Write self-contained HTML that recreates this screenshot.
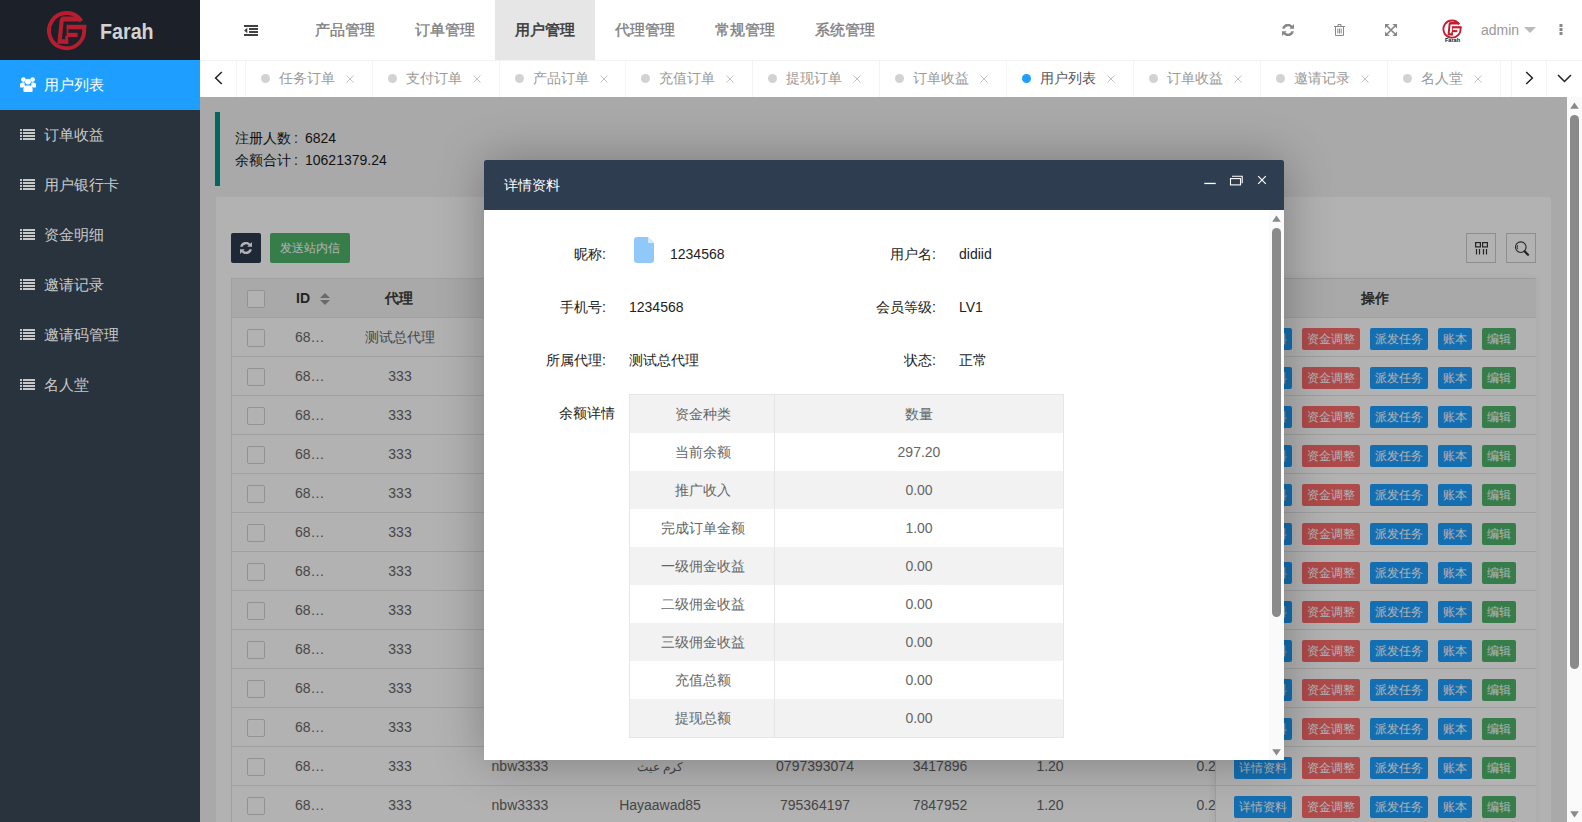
<!DOCTYPE html>
<html><head><meta charset="utf-8"><style>
*{box-sizing:border-box;margin:0;padding:0}
html,body{width:1582px;height:822px;overflow:hidden;background:#f2f2f2;font-family:"Liberation Sans",sans-serif;font-size:14px;color:#333}
svg{display:block}
#side{position:absolute;left:0;top:0;width:200px;height:822px;background:#28333e}
#logo{position:absolute;left:0;top:0;width:200px;height:60px;background:#1c2129}
#logo .t{position:absolute;left:100px;top:18.5px;font-size:20px;line-height:24px;font-weight:bold;color:#d2d2d2;transform:scale(0.985,1.07);transform-origin:0 0}
#logo svg{position:absolute;left:44px;top:8px}
.mi{position:absolute;left:0;width:200px;height:50px;color:#c8c8c8;font-size:15px;line-height:50px}
.mi.on{background:#1e9fff;color:#fff}
.mi span{position:absolute;left:44px;top:0}
.mi svg{position:absolute;left:20px}
#hdr{position:absolute;left:200px;top:0;width:1382px;height:60px;background:#fff}
#hdr .ic{position:absolute}
.tm{position:absolute;top:0;width:100px;height:60px;line-height:60px;text-align:center;font-size:15px;color:#808080;-webkit-text-stroke:0.35px #808080}
.tm.on{background:#e6e6e6;color:#3c3c3c;-webkit-text-stroke:0.55px #3c3c3c}
#admin{position:absolute;left:1281px;top:21px;font-size:14px;line-height:18px;color:#999}
#tabs{position:absolute;left:200px;top:60px;width:1382px;height:37px;background:#fff;border-top:1px solid #f4f4f4}
.tb{position:absolute;top:0;height:36px;line-height:36px;font-size:14px;color:#999;border-left:1px solid #f4f4f4}
.tb i{position:absolute;left:15px;top:13px;width:9px;height:9px;border-radius:50%;background:#d2d2d2}
.tb.on i{background:#1e9fff}
.tb.on{color:#555}
.tb b{position:absolute;left:33px;top:-1px;font-weight:normal}
.tb svg{position:absolute;top:14px}
.tbr{position:absolute;top:0;height:36px;border-left:1px solid #f4f4f4}
#cont{position:absolute;left:200px;top:97px;width:1367px;height:725px;background:#f2f2f2;overflow:hidden}
#shade{position:absolute;left:200px;top:97px;width:1367px;height:725px;background:rgba(0,0,0,.3)}
#vscroll{position:absolute;left:1567px;top:97px;width:15px;height:725px;background:#fafafa}
#quote{position:absolute;left:15px;top:15px;width:1337px;height:74px;padding:15px 0 15px 15px;line-height:22px;border-left:5px solid #009688;color:#1a1a1a;background:#f2f2f2}
.fc{display:inline-block;width:14px;padding-left:3px}
#card{position:absolute;left:16px;top:100px;width:1335px;height:800px;background:#fff;border-radius:2px}
.tbtn{position:absolute;height:30px;border-radius:2px}
.tico{position:absolute;width:30px;height:30px;border:1px solid #ccc}
#tbl{position:absolute;left:31px;top:181px;width:1305px;height:600px;border-left:1px solid #e6e6e6;border-right:1px solid #e6e6e6;border-top:1px solid #e6e6e6}
.thead{position:absolute;left:0;top:0;right:0;height:39px;background:#f2f2f2;border-bottom:1px solid #e6e6e6}
.th{position:absolute;height:38px;line-height:38px;font-weight:bold;color:#333;font-size:14px}
.tr{position:absolute;left:0;right:0;height:39px;border-bottom:1px solid #e6e6e6}
.th.cj{font-weight:normal;-webkit-text-stroke:0.5px #333}
.td{position:absolute;height:38px;line-height:38px;color:#666;font-size:14px;white-space:nowrap}
.td.c{text-align:center}
.cb{position:absolute;width:18px;height:18px;border:1px solid #d2d2d2;border-radius:2px;background:#fff}
#fixr{position:absolute;left:983px;top:0;width:321px;height:600px;background:#fff;border-left:1px solid #e6e6e6;box-shadow:-1px 0 8px rgba(0,0,0,.08)}
#modal{position:absolute;left:484px;top:160px;width:800px;height:600px;background:#fff;border-radius:2px 2px 0 0;box-shadow:1px 1px 50px rgba(0,0,0,.3)}
#mtitle{position:absolute;left:0;top:0;width:800px;height:50px;line-height:50px;padding-left:20px;background:#2e3d50;color:#fff;font-size:14px;border-radius:2px 2px 0 0}
#mbody{position:absolute;left:0;top:50px;width:800px;height:550px;overflow:hidden}
.ml{position:absolute;height:20px;line-height:20px;text-align:right;color:#222;font-size:14px}
.mv{position:absolute;height:20px;line-height:20px;color:#222;font-size:14px;white-space:nowrap}
#mtbl{position:absolute;left:145px;top:184px;width:435px;height:344px;border:1px solid #e6e6e6}
.mr{position:absolute;left:0;width:433px;height:38px}
.mc{position:absolute;top:0;height:38px;line-height:38px;text-align:center;color:#666;font-size:14px}
#mscroll{position:absolute;left:785px;top:0;width:15px;height:550px;background:#fafafa}
.bx{position:absolute;height:22px;line-height:22px;font-size:12px;color:#fff;text-align:center;border-radius:2px;white-space:nowrap}
</style></head>
<body>
<div id="side"><div id="logo"><svg width="46" height="46" viewBox="0 0 46 46"><g fill="#b81d2f"><path d="M37.36 13.1 A17.6 17.6 0 1 0 39.8 19" fill="none" stroke="#b81d2f" stroke-width="3.9"/><path d="M13.3 35.8 L15.7 12 L19.8 12 L17.9 31.3 L24.2 31.3 L24.2 35.8 Z"/><path d="M15.8 12.5 Q16.2 8.4 19.5 8.4 L31 8.4 Q35.5 8.6 38.6 11 L36.6 13.4 L20 13.4 Z"/><rect x="22.7" y="16.8" width="19.6" height="4.5"/><rect x="22.7" y="16.8" width="1.6" height="12.2"/><rect x="22.7" y="24.8" width="10.9" height="4.3"/><rect x="21.2" y="28" width="3" height="7.8"/></g></svg><div class="t">Farah</div></div>
<div class="mi on" style="top:60px"><svg style="top:17px" width="16" height="15" viewBox="0 0 16 15"><g fill="#fff"><circle cx="3.4" cy="2.6" r="2.3"/><circle cx="12.6" cy="2.6" r="2.3"/><circle cx="8" cy="4.6" r="2.9"/><path d="M0 9.6 L0 8 Q0 5.4 2.6 5.4 L4.6 5.4 Q4.2 7.6 5.4 9 Q3.8 9.4 3.2 10.6 L0.6 10.6 Q0 10.6 0 9.6 Z"/><path d="M16 9.6 L16 8 Q16 5.4 13.4 5.4 L11.4 5.4 Q11.8 7.6 10.6 9 Q12.2 9.4 12.8 10.6 L15.4 10.6 Q16 10.6 16 9.6 Z"/><path d="M3.4 14 L3.4 11.8 Q3.4 8.4 6.6 8.4 L9.4 8.4 Q12.6 8.4 12.6 11.8 L12.6 14 Q12.6 15 11.6 15 L4.4 15 Q3.4 15 3.4 14 Z"/></g></svg><span>用户列表</span></div>
<div class="mi" style="top:110px"><svg style="top:19px" width="15" height="11" viewBox="0 0 15 11"><g fill="#c8c8c8"><rect x="0" y="0" width="2" height="2"/><rect x="3" y="0" width="12" height="2"/><rect x="0" y="3" width="2" height="2"/><rect x="3" y="3" width="12" height="2"/><rect x="0" y="6" width="2" height="2"/><rect x="3" y="6" width="12" height="2"/><rect x="0" y="9" width="2" height="2"/><rect x="3" y="9" width="12" height="2"/></g></svg><span>订单收益</span></div>
<div class="mi" style="top:160px"><svg style="top:19px" width="15" height="11" viewBox="0 0 15 11"><g fill="#c8c8c8"><rect x="0" y="0" width="2" height="2"/><rect x="3" y="0" width="12" height="2"/><rect x="0" y="3" width="2" height="2"/><rect x="3" y="3" width="12" height="2"/><rect x="0" y="6" width="2" height="2"/><rect x="3" y="6" width="12" height="2"/><rect x="0" y="9" width="2" height="2"/><rect x="3" y="9" width="12" height="2"/></g></svg><span>用户银行卡</span></div>
<div class="mi" style="top:210px"><svg style="top:19px" width="15" height="11" viewBox="0 0 15 11"><g fill="#c8c8c8"><rect x="0" y="0" width="2" height="2"/><rect x="3" y="0" width="12" height="2"/><rect x="0" y="3" width="2" height="2"/><rect x="3" y="3" width="12" height="2"/><rect x="0" y="6" width="2" height="2"/><rect x="3" y="6" width="12" height="2"/><rect x="0" y="9" width="2" height="2"/><rect x="3" y="9" width="12" height="2"/></g></svg><span>资金明细</span></div>
<div class="mi" style="top:260px"><svg style="top:19px" width="15" height="11" viewBox="0 0 15 11"><g fill="#c8c8c8"><rect x="0" y="0" width="2" height="2"/><rect x="3" y="0" width="12" height="2"/><rect x="0" y="3" width="2" height="2"/><rect x="3" y="3" width="12" height="2"/><rect x="0" y="6" width="2" height="2"/><rect x="3" y="6" width="12" height="2"/><rect x="0" y="9" width="2" height="2"/><rect x="3" y="9" width="12" height="2"/></g></svg><span>邀请记录</span></div>
<div class="mi" style="top:310px"><svg style="top:19px" width="15" height="11" viewBox="0 0 15 11"><g fill="#c8c8c8"><rect x="0" y="0" width="2" height="2"/><rect x="3" y="0" width="12" height="2"/><rect x="0" y="3" width="2" height="2"/><rect x="3" y="3" width="12" height="2"/><rect x="0" y="6" width="2" height="2"/><rect x="3" y="6" width="12" height="2"/><rect x="0" y="9" width="2" height="2"/><rect x="3" y="9" width="12" height="2"/></g></svg><span>邀请码管理</span></div>
<div class="mi" style="top:360px"><svg style="top:19px" width="15" height="11" viewBox="0 0 15 11"><g fill="#c8c8c8"><rect x="0" y="0" width="2" height="2"/><rect x="3" y="0" width="12" height="2"/><rect x="0" y="3" width="2" height="2"/><rect x="3" y="3" width="12" height="2"/><rect x="0" y="6" width="2" height="2"/><rect x="3" y="6" width="12" height="2"/><rect x="0" y="9" width="2" height="2"/><rect x="3" y="9" width="12" height="2"/></g></svg><span>名人堂</span></div>
</div>
<div id="hdr">
<svg class="ic" style="left:44px;top:25px" width="14" height="11" viewBox="0 0 14 11"><g fill="#404040"><rect x="0" y="0" width="14" height="2"/><rect x="5" y="3" width="9" height="2"/><rect x="5" y="6" width="9" height="2"/><rect x="0" y="9" width="14" height="2"/><path d="M0 5.5 L3.3 2.8 L3.3 8.2 Z"/></g></svg>
<div class="tm" style="left:95px">产品管理</div>
<div class="tm" style="left:195px">订单管理</div>
<div class="tm on" style="left:295px">用户管理</div>
<div class="tm" style="left:395px">代理管理</div>
<div class="tm" style="left:495px">常规管理</div>
<div class="tm" style="left:595px">系统管理</div>
<svg class="ic" style="left:1082px;top:24px" width="12" height="12" viewBox="0 0 12 12"><g fill="#888"><path d="M0.2 4.8 A5.8 5.8 0 0 1 10.2 1.7 L12 0 L12 4.8 L7.3 4.8 L8.6 3.5 A3.6 3.6 0 0 0 2.6 4.8 Z"/><path d="M11.8 7.2 A5.8 5.8 0 0 1 1.8 10.3 L0 12 L0 7.2 L4.7 7.2 L3.4 8.5 A3.6 3.6 0 0 0 9.4 7.2 Z"/></g></svg>
<svg class="ic" style="left:1134px;top:24px" width="11" height="12" viewBox="0 0 11 12"><g fill="none" stroke="#888" stroke-width="1">
<path d="M0 2.5 L11 2.5"/><path d="M4 2.5 L4 0.5 L7 0.5 L7 2.5"/><path d="M1.5 2.5 L1.5 11.5 L9.5 11.5 L9.5 2.5"/>
<path d="M3.8 4.5 L3.8 9.5 M5.5 4.5 L5.5 9.5 M7.2 4.5 L7.2 9.5"/></g></svg>
<svg class="ic" style="left:1185px;top:24px" width="12" height="12" viewBox="0 0 12 12"><path d="M2 2 L10 10 M10 2 L2 10" stroke="#888" stroke-width="1.7" fill="none"/><g fill="#888"><path d="M0 0 L4.6 0 L0 4.6 Z"/><path d="M12 0 L7.4 0 L12 4.6 Z"/><path d="M0 12 L4.6 12 L0 7.4 Z"/><path d="M12 12 L7.4 12 L12 7.4 Z"/></g></svg>
<svg class="ic" style="left:1241px;top:18px" width="24" height="27" viewBox="0 0 24 27"><g transform="scale(0.487)" fill="#c01f31"><path d="M37.36 13.1 A17.6 17.6 0 1 0 39.8 19" fill="none" stroke="#c01f31" stroke-width="3.9"/><path d="M13.3 35.8 L15.7 12 L19.8 12 L17.9 31.3 L24.2 31.3 L24.2 35.8 Z"/><path d="M15.8 12.5 Q16.2 8.4 19.5 8.4 L31 8.4 Q35.5 8.6 38.6 11 L36.6 13.4 L20 13.4 Z"/><rect x="22.7" y="16.8" width="19.6" height="4.5"/><rect x="22.7" y="16.8" width="1.6" height="12.2"/><rect x="22.7" y="24.8" width="10.9" height="4.3"/><rect x="21.2" y="28" width="3" height="7.8"/></g><text x="11.5" y="24.3" font-family="Liberation Sans" font-size="5.6" font-weight="bold" text-anchor="middle" fill="#111">Farah</text></svg>
<div id="admin">admin</div>
<svg class="ic" style="left:1324px;top:27px" width="12" height="6" viewBox="0 0 12 6"><path d="M0 0 L12 0 L6 6 Z" fill="#bbb"/></svg>
<svg class="ic" style="left:1359px;top:24px" width="4" height="11" viewBox="0 0 4 11"><g fill="#888"><rect x="0.5" y="0" width="3" height="3"/><rect x="0.5" y="4" width="3" height="3"/><rect x="0.5" y="8" width="3" height="3"/></g></svg>
</div>
<div id="tabs">
<svg style="position:absolute;left:14px;top:10px" width="9" height="14" viewBox="0 0 9 14"><path d="M7.8 1 L1.6 7 L7.8 13" fill="none" stroke="#222" stroke-width="1.5"/></svg>
<div class="tbr" style="left:36px;width:9px"></div>
<div class="tb" style="left:45px;width:127px"><i></i><b>任务订单</b><svg style="left:100px" width="8" height="8" viewBox="0 0 8 8"><path d="M0.5 0.5L7.5 7.5M7.5 0.5L0.5 7.5" fill="none" stroke="#c2c2c2" stroke-width="1"/></svg></div>
<div class="tb" style="left:172px;width:127px"><i></i><b>支付订单</b><svg style="left:100px" width="8" height="8" viewBox="0 0 8 8"><path d="M0.5 0.5L7.5 7.5M7.5 0.5L0.5 7.5" fill="none" stroke="#c2c2c2" stroke-width="1"/></svg></div>
<div class="tb" style="left:299px;width:126px"><i></i><b>产品订单</b><svg style="left:100px" width="8" height="8" viewBox="0 0 8 8"><path d="M0.5 0.5L7.5 7.5M7.5 0.5L0.5 7.5" fill="none" stroke="#c2c2c2" stroke-width="1"/></svg></div>
<div class="tb" style="left:425px;width:127px"><i></i><b>充值订单</b><svg style="left:100px" width="8" height="8" viewBox="0 0 8 8"><path d="M0.5 0.5L7.5 7.5M7.5 0.5L0.5 7.5" fill="none" stroke="#c2c2c2" stroke-width="1"/></svg></div>
<div class="tb" style="left:552px;width:127px"><i></i><b>提现订单</b><svg style="left:100px" width="8" height="8" viewBox="0 0 8 8"><path d="M0.5 0.5L7.5 7.5M7.5 0.5L0.5 7.5" fill="none" stroke="#c2c2c2" stroke-width="1"/></svg></div>
<div class="tb" style="left:679px;width:127px"><i></i><b>订单收益</b><svg style="left:100px" width="8" height="8" viewBox="0 0 8 8"><path d="M0.5 0.5L7.5 7.5M7.5 0.5L0.5 7.5" fill="none" stroke="#c2c2c2" stroke-width="1"/></svg></div>
<div class="tb on" style="left:806px;width:127px"><i></i><b>用户列表</b><svg style="left:100px" width="8" height="8" viewBox="0 0 8 8"><path d="M0.5 0.5L7.5 7.5M7.5 0.5L0.5 7.5" fill="none" stroke="#c2c2c2" stroke-width="1"/></svg></div>
<div class="tb" style="left:933px;width:127px"><i></i><b>订单收益</b><svg style="left:100px" width="8" height="8" viewBox="0 0 8 8"><path d="M0.5 0.5L7.5 7.5M7.5 0.5L0.5 7.5" fill="none" stroke="#c2c2c2" stroke-width="1"/></svg></div>
<div class="tb" style="left:1060px;width:127px"><i></i><b>邀请记录</b><svg style="left:100px" width="8" height="8" viewBox="0 0 8 8"><path d="M0.5 0.5L7.5 7.5M7.5 0.5L0.5 7.5" fill="none" stroke="#c2c2c2" stroke-width="1"/></svg></div>
<div class="tb" style="left:1187px;width:113px"><i></i><b>名人堂</b><svg style="left:86px" width="8" height="8" viewBox="0 0 8 8"><path d="M0.5 0.5L7.5 7.5M7.5 0.5L0.5 7.5" fill="none" stroke="#c2c2c2" stroke-width="1"/></svg></div>
<div class="tbr" style="left:1300px;width:11px"></div>
<div class="tbr" style="left:1311px;width:35px"><svg style="position:absolute;left:13px;top:10px" width="9" height="14" viewBox="0 0 9 14"><path d="M1.2 1 L7.4 7 L1.2 13" fill="none" stroke="#222" stroke-width="1.5"/></svg></div>
<div class="tbr" style="left:1346px;width:36px"><svg style="position:absolute;left:10px;top:13px" width="16" height="9" viewBox="0 0 16 9"><path d="M1 1 L7.5 7.5 L14 1" fill="none" stroke="#222" stroke-width="1.5"/></svg></div>
</div>
<div id="cont">
<div id="quote"><div>注册人数<span class="fc">:</span>6824</div><div>余额合计<span class="fc">:</span>10621379.24</div></div>
<div id="card"></div>
<div class="tbtn" style="left:31px;top:136px;width:30px;background:#2b3a50"><svg style="position:absolute;left:9px;top:9px" width="12" height="12" viewBox="0 0 12 12"><g fill="#fff"><path d="M0.2 4.8 A5.8 5.8 0 0 1 10.2 1.7 L12 0 L12 4.8 L7.3 4.8 L8.6 3.5 A3.6 3.6 0 0 0 2.6 4.8 Z"/><path d="M11.8 7.2 A5.8 5.8 0 0 1 1.8 10.3 L0 12 L0 7.2 L4.7 7.2 L3.4 8.5 A3.6 3.6 0 0 0 9.4 7.2 Z"/></g></svg></div>
<div class="tbtn" style="left:70px;top:136px;width:80px;background:#50b46a;color:#fff;font-size:12px;line-height:30px;text-align:center">发送站内信</div>
<div class="tico" style="left:1266px;top:136px"><svg style="position:absolute;left:8px;top:8px" width="13" height="13" viewBox="0 0 13 13"><g fill="none" stroke="#333" stroke-width="1.2"><rect x="0.6" y="0.6" width="4.8" height="4.3"/><rect x="7.6" y="0.6" width="4.8" height="4.3"/><path d="M1.5 7 L1.5 12.5 M4.5 7 L4.5 12.5 M8.5 7 L8.5 12.5 M11.5 7 L11.5 12.5"/></g></svg></div>
<div class="tico" style="left:1306px;top:136px"><svg style="position:absolute;left:7px;top:7px" width="16" height="16" viewBox="0 0 16 16"><g fill="none" stroke="#333"><circle cx="6.8" cy="6.2" r="5.3" stroke-width="1.1"/><path d="M10.6 10.2 L14 13.8" stroke-width="2.2" stroke-linecap="round"/><path d="M3.8 4.2 A3.6 3.6 0 0 0 3.8 8.2" stroke-width="0.9"/></g></svg></div>
<div id="tbl">
<div class="thead"></div>
<div class="th" style="left:64px;top:0">ID<svg style="position:absolute;left:24px;top:14px" width="10" height="12" viewBox="0 0 10 12"><g fill="#999"><path d="M0 5 L5 0 L10 5 Z"/><path d="M0 7 L5 12 L10 7 Z"/></g></svg></div>
<div class="th cj" style="left:117px;top:-0.5px;width:100px;text-align:center">代理</div>
<div class="cb" style="left:15px;top:11px"></div>
<div class="tr" style="top:39px"></div>
<div class="cb" style="left:15px;top:50px"></div>
<div class="td" style="left:63px;top:39px">68…</div>
<div class="td c" style="left:118px;top:39px;width:100px">测试总代理</div>
<div class="tr" style="top:78px"></div>
<div class="cb" style="left:15px;top:89px"></div>
<div class="td" style="left:63px;top:78px">68…</div>
<div class="td c" style="left:118px;top:78px;width:100px">333</div>
<div class="tr" style="top:117px"></div>
<div class="cb" style="left:15px;top:128px"></div>
<div class="td" style="left:63px;top:117px">68…</div>
<div class="td c" style="left:118px;top:117px;width:100px">333</div>
<div class="tr" style="top:156px"></div>
<div class="cb" style="left:15px;top:167px"></div>
<div class="td" style="left:63px;top:156px">68…</div>
<div class="td c" style="left:118px;top:156px;width:100px">333</div>
<div class="tr" style="top:195px"></div>
<div class="cb" style="left:15px;top:206px"></div>
<div class="td" style="left:63px;top:195px">68…</div>
<div class="td c" style="left:118px;top:195px;width:100px">333</div>
<div class="tr" style="top:234px"></div>
<div class="cb" style="left:15px;top:245px"></div>
<div class="td" style="left:63px;top:234px">68…</div>
<div class="td c" style="left:118px;top:234px;width:100px">333</div>
<div class="tr" style="top:273px"></div>
<div class="cb" style="left:15px;top:284px"></div>
<div class="td" style="left:63px;top:273px">68…</div>
<div class="td c" style="left:118px;top:273px;width:100px">333</div>
<div class="tr" style="top:312px"></div>
<div class="cb" style="left:15px;top:323px"></div>
<div class="td" style="left:63px;top:312px">68…</div>
<div class="td c" style="left:118px;top:312px;width:100px">333</div>
<div class="tr" style="top:351px"></div>
<div class="cb" style="left:15px;top:362px"></div>
<div class="td" style="left:63px;top:351px">68…</div>
<div class="td c" style="left:118px;top:351px;width:100px">333</div>
<div class="tr" style="top:390px"></div>
<div class="cb" style="left:15px;top:401px"></div>
<div class="td" style="left:63px;top:390px">68…</div>
<div class="td c" style="left:118px;top:390px;width:100px">333</div>
<div class="tr" style="top:429px"></div>
<div class="cb" style="left:15px;top:440px"></div>
<div class="td" style="left:63px;top:429px">68…</div>
<div class="td c" style="left:118px;top:429px;width:100px">333</div>
<div class="tr" style="top:468px"></div>
<div class="cb" style="left:15px;top:479px"></div>
<div class="td" style="left:63px;top:468px">68…</div>
<div class="td c" style="left:118px;top:468px;width:100px">333</div>
<div class="td c" style="left:208px;top:468px;width:160px">nbw3333</div>
<div class="td c" style="left:348px;top:468px;width:160px"><span style="font-size:12px">كرم عيث</span></div>
<div class="td c" style="left:503px;top:468px;width:160px">0797393074</div>
<div class="td c" style="left:628px;top:468px;width:160px">3417896</div>
<div class="td c" style="left:738px;top:468px;width:160px">1.20</div>
<div class="td c" style="left:898px;top:468px;width:160px">0.20</div>
<div class="tr" style="top:507px"></div>
<div class="cb" style="left:15px;top:518px"></div>
<div class="td" style="left:63px;top:507px">68…</div>
<div class="td c" style="left:118px;top:507px;width:100px">333</div>
<div class="td c" style="left:208px;top:507px;width:160px">nbw3333</div>
<div class="td c" style="left:348px;top:507px;width:160px">Hayaawad85</div>
<div class="td c" style="left:503px;top:507px;width:160px">795364197</div>
<div class="td c" style="left:628px;top:507px;width:160px">7847952</div>
<div class="td c" style="left:738px;top:507px;width:160px">1.20</div>
<div class="td c" style="left:898px;top:507px;width:160px">0.20</div>
<div id="fixr">
<div class="thead"></div><div class="th cj" style="left:-1px;top:-0.5px;width:320px;text-align:center">操作</div>
<div class="tr" style="top:39px"></div>
<div class="bx" style="left:18px;top:49px;width:58px;background:#1e9fff">详情资料</div>
<div class="bx" style="left:86px;top:49px;width:58px;background:#fb6a6a">资金调整</div>
<div class="bx" style="left:154px;top:49px;width:58px;background:#1e9fff">派发任务</div>
<div class="bx" style="left:222px;top:49px;width:34px;background:#1e9fff">账本</div>
<div class="bx" style="left:266px;top:49px;width:34px;background:#50b46a">编辑</div>
<div class="tr" style="top:78px"></div>
<div class="bx" style="left:18px;top:88px;width:58px;background:#1e9fff">详情资料</div>
<div class="bx" style="left:86px;top:88px;width:58px;background:#fb6a6a">资金调整</div>
<div class="bx" style="left:154px;top:88px;width:58px;background:#1e9fff">派发任务</div>
<div class="bx" style="left:222px;top:88px;width:34px;background:#1e9fff">账本</div>
<div class="bx" style="left:266px;top:88px;width:34px;background:#50b46a">编辑</div>
<div class="tr" style="top:117px"></div>
<div class="bx" style="left:18px;top:127px;width:58px;background:#1e9fff">详情资料</div>
<div class="bx" style="left:86px;top:127px;width:58px;background:#fb6a6a">资金调整</div>
<div class="bx" style="left:154px;top:127px;width:58px;background:#1e9fff">派发任务</div>
<div class="bx" style="left:222px;top:127px;width:34px;background:#1e9fff">账本</div>
<div class="bx" style="left:266px;top:127px;width:34px;background:#50b46a">编辑</div>
<div class="tr" style="top:156px"></div>
<div class="bx" style="left:18px;top:166px;width:58px;background:#1e9fff">详情资料</div>
<div class="bx" style="left:86px;top:166px;width:58px;background:#fb6a6a">资金调整</div>
<div class="bx" style="left:154px;top:166px;width:58px;background:#1e9fff">派发任务</div>
<div class="bx" style="left:222px;top:166px;width:34px;background:#1e9fff">账本</div>
<div class="bx" style="left:266px;top:166px;width:34px;background:#50b46a">编辑</div>
<div class="tr" style="top:195px"></div>
<div class="bx" style="left:18px;top:205px;width:58px;background:#1e9fff">详情资料</div>
<div class="bx" style="left:86px;top:205px;width:58px;background:#fb6a6a">资金调整</div>
<div class="bx" style="left:154px;top:205px;width:58px;background:#1e9fff">派发任务</div>
<div class="bx" style="left:222px;top:205px;width:34px;background:#1e9fff">账本</div>
<div class="bx" style="left:266px;top:205px;width:34px;background:#50b46a">编辑</div>
<div class="tr" style="top:234px"></div>
<div class="bx" style="left:18px;top:244px;width:58px;background:#1e9fff">详情资料</div>
<div class="bx" style="left:86px;top:244px;width:58px;background:#fb6a6a">资金调整</div>
<div class="bx" style="left:154px;top:244px;width:58px;background:#1e9fff">派发任务</div>
<div class="bx" style="left:222px;top:244px;width:34px;background:#1e9fff">账本</div>
<div class="bx" style="left:266px;top:244px;width:34px;background:#50b46a">编辑</div>
<div class="tr" style="top:273px"></div>
<div class="bx" style="left:18px;top:283px;width:58px;background:#1e9fff">详情资料</div>
<div class="bx" style="left:86px;top:283px;width:58px;background:#fb6a6a">资金调整</div>
<div class="bx" style="left:154px;top:283px;width:58px;background:#1e9fff">派发任务</div>
<div class="bx" style="left:222px;top:283px;width:34px;background:#1e9fff">账本</div>
<div class="bx" style="left:266px;top:283px;width:34px;background:#50b46a">编辑</div>
<div class="tr" style="top:312px"></div>
<div class="bx" style="left:18px;top:322px;width:58px;background:#1e9fff">详情资料</div>
<div class="bx" style="left:86px;top:322px;width:58px;background:#fb6a6a">资金调整</div>
<div class="bx" style="left:154px;top:322px;width:58px;background:#1e9fff">派发任务</div>
<div class="bx" style="left:222px;top:322px;width:34px;background:#1e9fff">账本</div>
<div class="bx" style="left:266px;top:322px;width:34px;background:#50b46a">编辑</div>
<div class="tr" style="top:351px"></div>
<div class="bx" style="left:18px;top:361px;width:58px;background:#1e9fff">详情资料</div>
<div class="bx" style="left:86px;top:361px;width:58px;background:#fb6a6a">资金调整</div>
<div class="bx" style="left:154px;top:361px;width:58px;background:#1e9fff">派发任务</div>
<div class="bx" style="left:222px;top:361px;width:34px;background:#1e9fff">账本</div>
<div class="bx" style="left:266px;top:361px;width:34px;background:#50b46a">编辑</div>
<div class="tr" style="top:390px"></div>
<div class="bx" style="left:18px;top:400px;width:58px;background:#1e9fff">详情资料</div>
<div class="bx" style="left:86px;top:400px;width:58px;background:#fb6a6a">资金调整</div>
<div class="bx" style="left:154px;top:400px;width:58px;background:#1e9fff">派发任务</div>
<div class="bx" style="left:222px;top:400px;width:34px;background:#1e9fff">账本</div>
<div class="bx" style="left:266px;top:400px;width:34px;background:#50b46a">编辑</div>
<div class="tr" style="top:429px"></div>
<div class="bx" style="left:18px;top:439px;width:58px;background:#1e9fff">详情资料</div>
<div class="bx" style="left:86px;top:439px;width:58px;background:#fb6a6a">资金调整</div>
<div class="bx" style="left:154px;top:439px;width:58px;background:#1e9fff">派发任务</div>
<div class="bx" style="left:222px;top:439px;width:34px;background:#1e9fff">账本</div>
<div class="bx" style="left:266px;top:439px;width:34px;background:#50b46a">编辑</div>
<div class="tr" style="top:468px"></div>
<div class="bx" style="left:18px;top:478px;width:58px;background:#1e9fff">详情资料</div>
<div class="bx" style="left:86px;top:478px;width:58px;background:#fb6a6a">资金调整</div>
<div class="bx" style="left:154px;top:478px;width:58px;background:#1e9fff">派发任务</div>
<div class="bx" style="left:222px;top:478px;width:34px;background:#1e9fff">账本</div>
<div class="bx" style="left:266px;top:478px;width:34px;background:#50b46a">编辑</div>
<div class="tr" style="top:507px"></div>
<div class="bx" style="left:18px;top:517px;width:58px;background:#1e9fff">详情资料</div>
<div class="bx" style="left:86px;top:517px;width:58px;background:#fb6a6a">资金调整</div>
<div class="bx" style="left:154px;top:517px;width:58px;background:#1e9fff">派发任务</div>
<div class="bx" style="left:222px;top:517px;width:34px;background:#1e9fff">账本</div>
<div class="bx" style="left:266px;top:517px;width:34px;background:#50b46a">编辑</div>
</div>
</div>
</div>
<div id="shade"></div>
<div id="vscroll"><svg style="position:absolute;left:3px;top:5px" width="9" height="7" viewBox="0 0 9 7"><path d="M4.5 0.5 L8.8 6.8 L0.2 6.8 Z" fill="#8a8a8a"/></svg><div style="position:absolute;left:3px;top:18px;width:9px;height:554px;border-radius:4.5px;background:#8a8a8a"></div><svg style="position:absolute;left:3px;top:714px" width="9" height="7" viewBox="0 0 9 7"><path d="M0.2 0.2 L8.8 0.2 L4.5 6.5 Z" fill="#8a8a8a"/></svg></div>
<div id="modal">
<div id="mtitle">详情资料</div>
<svg style="position:absolute;left:720px;top:22px" width="12" height="3" viewBox="0 0 12 3"><rect x="0.3" y="0.8" width="11.4" height="1.3" fill="#fff"/></svg>
<svg style="position:absolute;left:745px;top:15px" width="14" height="11" viewBox="0 0 14 11"><g fill="none" stroke="#fff" stroke-width="1.1"><rect x="1.5" y="3.6" width="10" height="6.3"/><path d="M3 1.3 L13.2 1.3 L13.2 8.2"/></g></svg>
<svg style="position:absolute;left:773px;top:15px" width="10" height="10" viewBox="0 0 10 10"><path d="M1.2 1.2 L8.8 8.8 M8.8 1.2 L1.2 8.8" stroke="#fff" stroke-width="1.2" fill="none"/></svg>
<div id="mbody">
<div class="ml" style="left:0;top:34px;width:122px">昵称:</div>
<svg style="position:absolute;left:150px;top:27px" width="20" height="26" viewBox="0 0 20 26"><path d="M3 0 L14 0 L20 6 L20 23 Q20 26 17 26 L3 26 Q0 26 0 23 L0 3 Q0 0 3 0 Z" fill="#90c9f9"/><path d="M14 0 L20 6 L14 6 Z" fill="#d3eafd"/></svg>
<div class="mv" style="left:186px;top:34px">1234568</div>
<div class="ml" style="left:300px;top:34px;width:152px">用户名:</div>
<div class="mv" style="left:475px;top:34px">didiid</div>
<div class="ml" style="left:0;top:87px;width:122px">手机号:</div>
<div class="mv" style="left:145px;top:87px">1234568</div>
<div class="ml" style="left:300px;top:87px;width:152px">会员等级:</div>
<div class="mv" style="left:475px;top:87px">LV1</div>
<div class="ml" style="left:0;top:140px;width:122px">所属代理:</div>
<div class="mv" style="left:145px;top:140px">测试总代理</div>
<div class="ml" style="left:300px;top:140px;width:152px">状态:</div>
<div class="mv" style="left:475px;top:140px">正常</div>
<div class="ml" style="left:0;top:193px;width:131px">余额详情</div>
<div id="mtbl">
<div class="mr" style="top:0px;background:#f2f2f2"><div class="mc" style="left:0;width:145px">资金种类</div><div class="mc" style="left:145px;width:288px">数量</div></div>
<div class="mr" style="top:38px;background:#fff"><div class="mc" style="left:0;width:145px">当前余额</div><div class="mc" style="left:145px;width:288px">297.20</div></div>
<div class="mr" style="top:76px;background:#f2f2f2"><div class="mc" style="left:0;width:145px">推广收入</div><div class="mc" style="left:145px;width:288px">0.00</div></div>
<div class="mr" style="top:114px;background:#fff"><div class="mc" style="left:0;width:145px">完成订单金额</div><div class="mc" style="left:145px;width:288px">1.00</div></div>
<div class="mr" style="top:152px;background:#f2f2f2"><div class="mc" style="left:0;width:145px">一级佣金收益</div><div class="mc" style="left:145px;width:288px">0.00</div></div>
<div class="mr" style="top:190px;background:#fff"><div class="mc" style="left:0;width:145px">二级佣金收益</div><div class="mc" style="left:145px;width:288px">0.00</div></div>
<div class="mr" style="top:228px;background:#f2f2f2"><div class="mc" style="left:0;width:145px">三级佣金收益</div><div class="mc" style="left:145px;width:288px">0.00</div></div>
<div class="mr" style="top:266px;background:#fff"><div class="mc" style="left:0;width:145px">充值总额</div><div class="mc" style="left:145px;width:288px">0.00</div></div>
<div class="mr" style="top:304px;background:#f2f2f2"><div class="mc" style="left:0;width:145px">提现总额</div><div class="mc" style="left:145px;width:288px">0.00</div></div>
<div style="position:absolute;left:144px;top:0;width:1px;height:342px;background:#e6e6e6"></div>
</div>
<div id="mscroll"><svg style="position:absolute;left:3px;top:5px" width="9" height="7" viewBox="0 0 9 7"><path d="M4.5 0.5 L8.8 6.8 L0.2 6.8 Z" fill="#8a8a8a"/></svg><div style="position:absolute;left:3px;top:18px;width:9px;height:389px;border-radius:4.5px;background:#8a8a8a"></div><svg style="position:absolute;left:3px;top:539px" width="9" height="7" viewBox="0 0 9 7"><path d="M0.2 0.2 L8.8 0.2 L4.5 6.5 Z" fill="#8a8a8a"/></svg></div>
</div></div>
</body></html>
